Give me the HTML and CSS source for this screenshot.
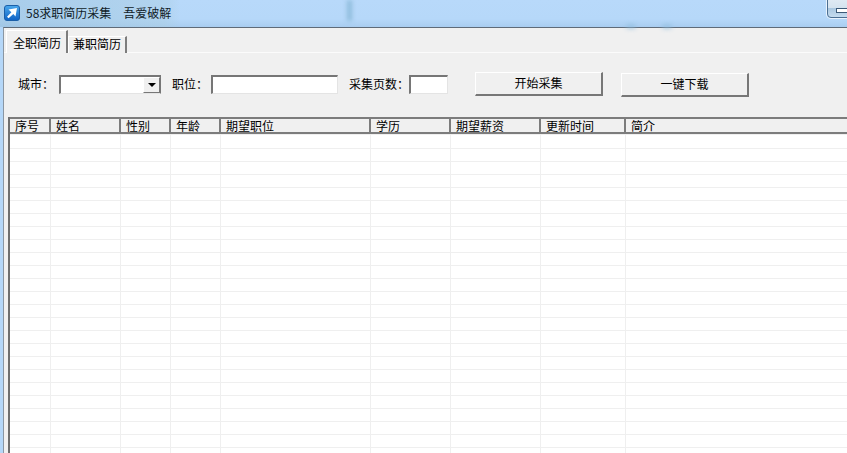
FILE: index.html
```html
<!DOCTYPE html>
<html lang="zh-CN">
<head>
<meta charset="utf-8">
<title>58求职简历采集 吾爱破解</title>
<link rel="stylesheet" href="styles.css">
</head>
<body>
<div class="titlebar">
  <span class="smudge smudge-a"></span>
  <span class="smudge smudge-b"></span>
  <span class="smudge smudge-c"></span>
  <span class="app-icon">
    <svg viewBox="0 0 16 16" width="16" height="16" aria-hidden="true">
      <defs>
        <linearGradient id="ig" x1="0" y1="0" x2="0" y2="1">
          <stop offset="0" stop-color="#4aa8ec"/>
          <stop offset="1" stop-color="#0f62c4"/>
        </linearGradient>
      </defs>
      <rect x="0.5" y="0.5" width="15" height="15" rx="2.5" fill="url(#ig)" stroke="#1b5fa8"/>
      <path d="M4.5 4.5L13 3l-1.5 8.5-2.2-2.6L4.6 13.2 3 11.8l4.4-4.6z" fill="#fff"/>
    </svg>
  </span>
  <span class="app-title">58求职简历采集</span>
  <span class="app-title app-title-b">吾爱破解</span>
  <span class="win-btn"><span class="win-btn-bar"></span></span>
</div>
<div class="window">
  <div class="tabs">
    <div class="tab tab-active">全职简历</div>
    <div class="tab">兼职简历</div>
  </div>
  <div class="form">
    <label class="lbl lbl-city">城市<span class="colon">：</span></label>
    <div class="field combo"><span class="combo-btn"><span class="combo-arrow"></span></span></div>
    <label class="lbl lbl-pos">职位<span class="colon">：</span></label>
    <div class="field input-pos"></div>
    <label class="lbl lbl-pages">采集页数<span class="colon">：</span></label>
    <div class="field input-pages"></div>
    <button class="btn btn-start" type="button">开始采集</button>
    <button class="btn btn-down" type="button">一键下载</button>
  </div>
  <div class="grid-wrap">
    <table class="grid">
      <colgroup>
        <col class="c1"><col class="c2"><col class="c3"><col class="c4"><col class="c5"><col class="c6"><col class="c7"><col class="c8"><col>
      </colgroup>
      <thead>
        <tr><th>序号</th><th>姓名</th><th>性别</th><th>年龄</th><th>期望职位</th><th>学历</th><th>期望薪资</th><th>更新时间</th><th>简介</th></tr>
      </thead>
      <tbody>
        <tr class="first"><td></td><td></td><td></td><td></td><td></td><td></td><td></td><td></td><td></td></tr>
        <tr><td></td><td></td><td></td><td></td><td></td><td></td><td></td><td></td><td></td></tr>
        <tr><td></td><td></td><td></td><td></td><td></td><td></td><td></td><td></td><td></td></tr>
        <tr><td></td><td></td><td></td><td></td><td></td><td></td><td></td><td></td><td></td></tr>
        <tr><td></td><td></td><td></td><td></td><td></td><td></td><td></td><td></td><td></td></tr>
        <tr><td></td><td></td><td></td><td></td><td></td><td></td><td></td><td></td><td></td></tr>
        <tr><td></td><td></td><td></td><td></td><td></td><td></td><td></td><td></td><td></td></tr>
        <tr><td></td><td></td><td></td><td></td><td></td><td></td><td></td><td></td><td></td></tr>
        <tr><td></td><td></td><td></td><td></td><td></td><td></td><td></td><td></td><td></td></tr>
        <tr><td></td><td></td><td></td><td></td><td></td><td></td><td></td><td></td><td></td></tr>
        <tr><td></td><td></td><td></td><td></td><td></td><td></td><td></td><td></td><td></td></tr>
        <tr><td></td><td></td><td></td><td></td><td></td><td></td><td></td><td></td><td></td></tr>
        <tr><td></td><td></td><td></td><td></td><td></td><td></td><td></td><td></td><td></td></tr>
        <tr><td></td><td></td><td></td><td></td><td></td><td></td><td></td><td></td><td></td></tr>
        <tr><td></td><td></td><td></td><td></td><td></td><td></td><td></td><td></td><td></td></tr>
        <tr><td></td><td></td><td></td><td></td><td></td><td></td><td></td><td></td><td></td></tr>
        <tr><td></td><td></td><td></td><td></td><td></td><td></td><td></td><td></td><td></td></tr>
        <tr><td></td><td></td><td></td><td></td><td></td><td></td><td></td><td></td><td></td></tr>
        <tr><td></td><td></td><td></td><td></td><td></td><td></td><td></td><td></td><td></td></tr>
        <tr><td></td><td></td><td></td><td></td><td></td><td></td><td></td><td></td><td></td></tr>
        <tr><td></td><td></td><td></td><td></td><td></td><td></td><td></td><td></td><td></td></tr>
        <tr><td></td><td></td><td></td><td></td><td></td><td></td><td></td><td></td><td></td></tr>
        <tr><td></td><td></td><td></td><td></td><td></td><td></td><td></td><td></td><td></td></tr>
        <tr><td></td><td></td><td></td><td></td><td></td><td></td><td></td><td></td><td></td></tr>
        <tr><td></td><td></td><td></td><td></td><td></td><td></td><td></td><td></td><td></td></tr>
      </tbody>
    </table>
  </div>
</div>
</body>
</html>
```
FILE: styles.css
```css
* { box-sizing: border-box; }
html, body { height: 100%; }
body {
  margin: 0;
  width: 847px;
  height: 453px;
  overflow: hidden;
  display: flex;
  flex-direction: column;
  background: #b5d7f8;
  font-family: "Noto Sans CJK SC", "Liberation Sans", sans-serif;
  font-size: 12px;
  line-height: 16px;
  color: #000;
}

/* title bar */
.titlebar {
  position: relative;
  height: 27px;
  flex: none;
  display: flex;
  align-items: flex-start;
  padding: 5px 0 0 4px;
  background:
    linear-gradient(90deg, rgba(150,190,215,.45) 0, rgba(170,205,225,.45) 165px, rgba(181,215,248,0) 180px),
    linear-gradient(180deg, #b8d9fa 0, #b6d8f9 19px, #a9cdf0 27px);
}
.smudge { position: absolute; background: #8fbcdc; filter: blur(2px); }
.smudge-a { left: 347px; top: 0; width: 5px; height: 21px; }
.smudge-b { left: 626px; top: 24px; width: 10px; height: 5px; border-radius: 5px; opacity: .6; }
.smudge-c { left: 662px; top: 24px; width: 10px; height: 5px; border-radius: 5px; opacity: .6; }
.app-icon { width: 16px; height: 16px; flex: none; }
.app-icon svg { display: block; }
.app-title { margin: 0 0 0 6px; color: #101c28; }
.app-title-b { margin-left: 12px; }
.win-btn {
  position: absolute;
  right: -4px;
  top: -1px;
  width: 24px;
  height: 19px;
  border: 1px solid #4c6f92;
  border-radius: 0 0 0 4px;
  background: linear-gradient(180deg, #dfe9f3 0, #d5e3ef 45%, #a9c6df 46%, #c5dcef 100%);
  box-shadow: 0 0 0 1px rgba(255,255,255,.7);
}
.win-btn-bar {
  position: absolute;
  left: 8px;
  top: 8px;
  width: 12px;
  height: 5px;
  background: #fff;
  border: 1px solid #3d5a78;
}

/* window client */
.window {
  flex: 1;
  min-height: 0;
  margin-left: 3px;
  display: flex;
  flex-direction: column;
  background: #f0f0f0;
  border-top: 1px solid #5f6b78;
  border-left: 1px solid #8a96a2;
}

/* tabs */
.tabs {
  height: 25px;
  flex: none;
  display: flex;
  align-items: flex-end;
  padding-left: 2px;
  border-bottom: 1px solid #fbfbfb;
}
.tab {
  width: 59px;
  height: 17px;
  padding: 0 0 0 4px;
  line-height: 13px;
  background: #f0f0f0;
  border-top: 1px solid #fff;
  border-left: 1px solid #fff;
  border-right: 2px solid #7d7d7d;
  margin-bottom: -1px;
}
.tab-active {
  width: 62px;
  height: 23px;
  padding: 4px 0 0 6px;
  line-height: 15px;
  margin-bottom: -1px;
}

/* form */
.form {
  height: 64px;
  flex: none;
  display: flex;
  align-items: flex-start;
  padding-left: 14px;
}
.lbl { margin-top: 23px; height: 16px; white-space: nowrap; }
.colon { font-family: "Noto Sans CJK TC", sans-serif; }
.lbl-city { width: 41px; }
.lbl-pos { width: 39px; margin-left: 11px; }
.lbl-pages { width: 60px; margin-left: 11px; }
.field {
  margin-top: 22px;
  height: 19px;
  background: #fff;
  border-top: 2px solid #767676;
  border-left: 2px solid #767676;
  border-right: 1px solid #e4e4e4;
  border-bottom: 1px solid #e4e4e4;
}
.combo {
  width: 102px;
  display: flex;
  justify-content: flex-end;
  align-items: stretch;
  border-right-color: #767676;
}
.combo-btn {
  width: 17px;
  display: flex;
  align-items: center;
  justify-content: center;
  background: #f0f0f0;
  border-top: 1px solid #fff;
  border-left: 1px solid #fff;
  border-right: 1px solid #777;
  border-bottom: 1px solid #777;
}
.combo-arrow {
  width: 0;
  height: 0;
  border-left: 4px solid transparent;
  border-right: 4px solid transparent;
  border-top: 4px solid #000;
}
.input-pos { width: 127px; }
.input-pages { width: 39px; }
.btn {
  margin: 19px 0 0 0;
  width: 128px;
  height: 24px;
  padding: 0 0 2px;
  font: inherit;
  color: #000;
  background: #f0f0f0;
  border-top: 1px solid #fff;
  border-left: 1px solid #fff;
  border-right: 2px solid #777;
  border-bottom: 2px solid #777;
}
.btn-start { margin-left: 27px; }
.btn-down { margin: 20px 0 0 18px; }

/* data grid */
.grid-wrap {
  flex: 1;
  min-height: 0;
  overflow: hidden;
  margin-left: 4px;
  border-left: 2px solid #6f6f6f;
  background: #fff;
}
.grid {
  width: 837px;
  table-layout: fixed;
  border-collapse: separate;
  border-spacing: 0;
}
.c1 { width: 41px; }
.c2 { width: 70px; }
.c3, .c4 { width: 50px; }
.c5 { width: 150px; }
.c6 { width: 80px; }
.c7 { width: 90px; }
.c8 { width: 85px; }
.grid th {
  height: 17px;
  padding: 0 0 0 5px;
  font-weight: 400;
  font-size: 12px;
  line-height: 13px;
  text-align: left;
  overflow: hidden;
  background: #f0f0f0;
  border-top: 2px solid #7c7c7c;
  border-bottom: 2px solid #7c7c7c;
  border-right: 2px solid #7c7c7c;
}
.grid th:last-child { border-right: 0; }
.grid td {
  height: 13px;
  padding: 0;
  background: #fff;
  border-right: 1px solid #efefef;
  border-bottom: 1px solid #efefef;
}
.grid td:last-child { border-right: 0; }
.grid .first td { height: 15px; border-top: 1px solid #efefef; }
```
